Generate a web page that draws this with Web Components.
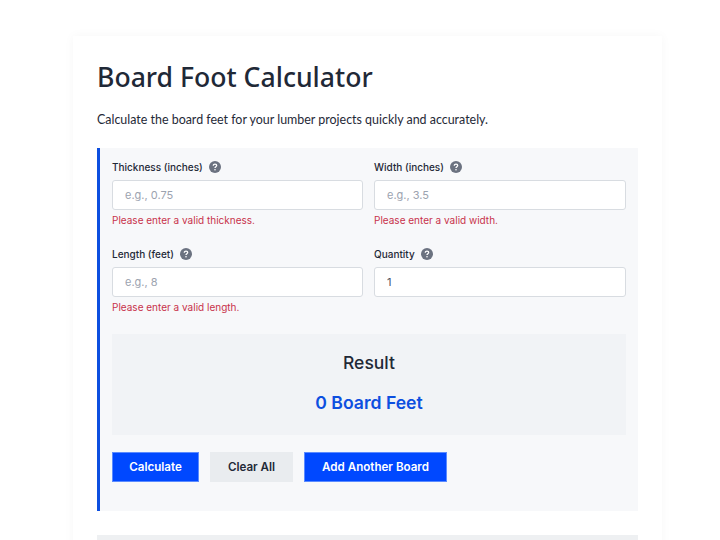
<!DOCTYPE html>
<html lang="en">
<head>
<meta charset="utf-8">
<title>Board Foot Calculator</title>
<style>
  html, body { margin: 0; height: 540px; overflow: hidden; background: #fff; }
  body { font-family: 'Inter', 'Noto Sans', sans-serif; color: #1f2937; }
</style>
</head>
<body>
<calculator-card>
  <calculator-form>
    <form-field slot="fields" label="Thickness (inches)" placeholder="e.g., 0.75" error="Please enter a valid thickness."></form-field>
    <form-field slot="fields" label="Width (inches)" placeholder="e.g., 3.5" error="Please enter a valid width."></form-field>
    <form-field slot="fields" label="Length (feet)" placeholder="e.g., 8" error="Please enter a valid length."></form-field>
    <form-field slot="fields" label="Quantity" value="1"></form-field>
    <result-box slot="result" value="0 Board Feet"></result-box>
    <action-button slot="actions" kind="primary" width="87">Calculate</action-button>
    <action-button slot="actions" kind="secondary" width="83">Clear All</action-button>
    <action-button slot="actions" kind="primary" width="143">Add Another Board</action-button>
  </calculator-form>
</calculator-card>

<script>
class CalculatorCard extends HTMLElement {
  constructor () {
    super()
    this.shadow = this.attachShadow({ mode: 'open' })
  }

  connectedCallback () {
    this.shadow.innerHTML =
    /* html */`
    <style>
      :host {
        background: #fff;
        box-shadow: 0 0 10px rgba(0, 0, 0, 0.04);
        box-sizing: border-box;
        display: block;
        height: 620px;
        margin: 36px 0 0 73px;
        padding: 24px;
        width: 589px;
      }

      h1 {
        color: #1f2937;
        font-family: 'Noto Sans', sans-serif;
        font-size: 26.6px;
        font-weight: 500;
        line-height: 35px;
        margin: 0 0 15px;
      }

      p {
        color: #1f2937;
        font-family: 'Lato', sans-serif;
        font-size: 12.44px;
        line-height: 20px;
        margin: 0 0 18px;
      }

      .next {
        background: #eef0f2;
        height: 60px;
        margin-top: 24px;
      }
    </style>
    <h1>Board Foot Calculator</h1>
    <p>Calculate the board feet for your lumber projects quickly and accurately.</p>
    <slot></slot>
    <div class="next"></div>
    `
  }
}

class CalculatorForm extends HTMLElement {
  constructor () {
    super()
    this.shadow = this.attachShadow({ mode: 'open' })
  }

  connectedCallback () {
    this.shadow.innerHTML =
    /* html */`
    <style>
      :host {
        background: #f7f8fa;
        border-left: 3px solid #0d4fe0;
        box-sizing: border-box;
        display: block;
        height: 363px;
        padding: 12px 12px 0;
      }

      .fields {
        column-gap: 11px;
        display: grid;
        grid-template-columns: 251px 1fr;
        row-gap: 20px;
      }

      .actions {
        display: flex;
        gap: 11px;
        margin-top: 17px;
      }
    </style>
    <div class="fields"><slot name="fields"></slot></div>
    <slot name="result"></slot>
    <div class="actions"><slot name="actions"></slot></div>
    `
  }
}

class FormField extends HTMLElement {
  constructor () {
    super()
    this.shadow = this.attachShadow({ mode: 'open' })
  }

  connectedCallback () {
    const label = this.getAttribute('label')
    const placeholder = this.getAttribute('placeholder') || ''
    const value = this.getAttribute('value') || ''
    const error = this.getAttribute('error')
    this.shadow.innerHTML =
    /* html */`
    <style>
      :host {
        display: block;
      }

      .label {
        align-items: center;
        color: #1f2937;
        display: flex;
        font-size: 10px;
        font-weight: 500;
        gap: 6.5px;
        height: 14px;
        margin-bottom: 6px;
      }

      svg {
        display: block;
      }

      input {
        background: #fff;
        border: 1px solid #d8dce1;
        border-radius: 3px;
        box-sizing: border-box;
        color: #4b5563;
        display: block;
        font-family: inherit;
        font-size: 11px;
        height: 30px;
        outline: none;
        padding: 0 12px;
        width: 100%;
      }

      input::placeholder {
        color: #9ca3af;
        opacity: 1;
      }

      .error {
        color: #c8324a;
        font-size: 10px;
        height: 14px;
        line-height: 14px;
        margin-top: 3px;
      }
    </style>
    <div class="label">
      <span>${label}</span>
      <svg width="12" height="12" viewBox="0 0 12 12">
        <circle cx="6" cy="6" r="6" fill="#6b7280"/>
        <path d="M4.3 4.7C4.3 3.7 5 3.1 6 3.1S7.7 3.7 7.7 4.6C7.7 5.7 6 5.8 6 7" fill="none" stroke="#fff" stroke-width="1.3"/>
        <circle cx="6" cy="8.8" r="0.8" fill="#fff"/>
      </svg>
    </div>
    <input type="text" placeholder="${placeholder}" value="${value}">
    ${error ? `<div class="error">${error}</div>` : ''}
    `
  }
}

class ResultBox extends HTMLElement {
  constructor () {
    super()
    this.shadow = this.attachShadow({ mode: 'open' })
  }

  connectedCallback () {
    this.shadow.innerHTML =
    /* html */`
    <style>
      :host {
        align-items: center;
        background: #f1f3f6;
        box-sizing: border-box;
        display: flex;
        flex-direction: column;
        height: 101px;
        margin-top: 20px;
        padding-top: 16px;
      }

      h2 {
        color: #1f2937;
        font-size: 17.5px;
        font-weight: 500;
        line-height: 26px;
        margin: 0 0 14px;
      }

      div {
        color: #0d4fe0;
        font-size: 17.6px;
        font-weight: 600;
        line-height: 26px;
      }
    </style>
    <h2>Result</h2>
    <div>${this.getAttribute('value')}</div>
    `
  }
}

class ActionButton extends HTMLElement {
  constructor () {
    super()
    this.shadow = this.attachShadow({ mode: 'open' })
  }

  connectedCallback () {
    const primary = this.getAttribute('kind') === 'primary'
    this.shadow.innerHTML =
    /* html */`
    <style>
      :host {
        display: block;
      }

      button {
        background: ${primary ? '#0048ff' : '#e9ecef'};
        border: 1px solid ${primary ? '#5b8bff' : '#e9ecef'};
        border-radius: 0;
        box-sizing: border-box;
        color: ${primary ? '#fff' : '#1f2937'};
        display: block;
        font-family: inherit;
        font-size: 11.6px;
        font-weight: 600;
        height: 30px;
        padding: 0;
        width: ${this.getAttribute('width')}px;
      }
    </style>
    <button type="button"><slot></slot></button>
    `
  }
}

customElements.define('calculator-card', CalculatorCard)
customElements.define('calculator-form', CalculatorForm)
customElements.define('form-field', FormField)
customElements.define('result-box', ResultBox)
customElements.define('action-button', ActionButton)
</script>
</body>
</html>
